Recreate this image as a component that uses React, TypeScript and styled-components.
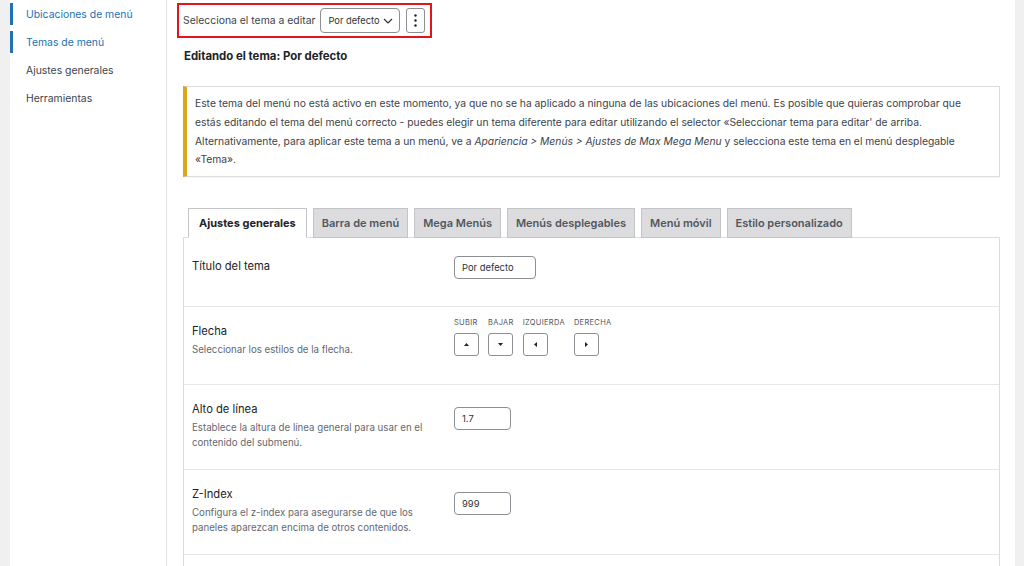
import styled, { createGlobalStyle } from "styled-components";

const GlobalStyle = createGlobalStyle`
  html, body {
    margin: 0;
    padding: 0;
    background: #f0f0f1;
    font-family: Inter, "Noto Sans", "Liberation Sans", sans-serif;
    color: #3c434a;
    overflow: hidden;
  }
  * { box-sizing: border-box; }
`;

const Page = styled.div`
  display: flex;
  min-height: 566px;
  padding-left: 10px;
  padding-right: 9px;
`;

const Sidebar = styled.nav`
  width: 157px;
  flex-shrink: 0;
  background: #fff;
  border-right: 1px solid #e2e4e7;
  padding-top: 3px;
  display: flex;
  flex-direction: column;
  gap: 6px;
`;

const NavItem = styled.a<{ $active?: boolean }>`
  display: flex;
  align-items: center;
  height: 22px;
  padding-left: 13px;
  border-left: 3px solid ${(p) => (p.$active ? "#2271b1" : "transparent")};
  color: ${(p) => (p.$active ? "#2271b1" : "#3c434a")};
  font-size: 10.4px;
  text-decoration: none;
`;

const Main = styled.main`
  flex: 1;
  background: #fff;
  padding: 3px 15px 0 10px;
  display: flex;
  flex-direction: column;
  & > * { flex-shrink: 0; }
`;

const ThemePicker = styled.div`
  align-self: flex-start;
  display: flex;
  align-items: center;
  height: 35px;
  padding: 0 5px 0 4px;
  border: 2px solid #e3141b;
  gap: 4px;
  font-size: 10.4px;
  color: #3c434a;
  white-space: nowrap;
`;

const Select = styled.div`
  display: flex;
  align-items: center;
  justify-content: space-between;
  width: 80px;
  height: 25px;
  padding: 0 6px 0 7px;
  margin-left: 1px;
  border: 1px solid #8c8f94;
  border-radius: 4px;
  font-size: 9.3px;
  color: #2c3338;
`;

const DotsButton = styled.div`
  display: flex;
  align-items: center;
  justify-content: center;
  width: 19px;
  height: 25px;
  margin-left: 2px;
  border: 1px solid #8c8f94;
  border-radius: 3px;
`;

const Heading = styled.h2`
  margin: 11px 0 0 7px;
  font-size: 11.4px;
  font-weight: 700;
  color: #1d2327;
  line-height: 14px;
`;

const Notice = styled.div`
  margin: 23px 0 0 6px;
  border: 1px solid #dcdcde;
  border-left: 4px solid #dba617;
  box-shadow: 0 1px 1px rgba(0, 0, 0, 0.04);
  padding: 7px 12px 7px 8px;
  font-size: 10.3px;
  line-height: 18.8px;
  color: #3c434a;
  p { margin: 0; }
`;

const Tabs = styled.div`
  display: flex;
  gap: 6px;
  margin: 31px 0 0 11px;
  position: relative;
  z-index: 1;
`;

const Tab = styled.div<{ $active?: boolean }>`
  height: 30px;
  padding: 0 ${(p) => (p.$active ? "10px" : "8px")};
  display: flex;
  align-items: center;
  font-size: 11px;
  font-weight: ${(p) => (p.$active ? 650 : 600)};
  background: ${(p) => (p.$active ? "#fff" : "#dcdcde")};
  color: ${(p) => (p.$active ? "#1d2327" : "#50575e")};
  border: 1px solid #c3c4c7;
  border-bottom-color: ${(p) => (p.$active ? "#fff" : "#c3c4c7")};
`;

const Panel = styled.div`
  margin: -1px 0 0 6px;
  border: 1px solid #dcdcde;
  border-bottom: none;
  flex: 1;
`;

const Row = styled.div<{ $height: number; $top?: number }>`
  display: grid;
  grid-template-columns: 262px 1fr;
  align-items: start;
  height: ${(p) => p.$height}px;
  padding: ${(p) => p.$top ?? 16}px 8px 0;
  & + & { border-top: 1px solid #e6e6e8; }
`;

const Label = styled.div`
  display: flex;
  flex-direction: column;
  gap: 4px;
`;

const Title = styled.div<{ $inline?: boolean }>`
  font-size: 11.2px;
  line-height: 16px;
  color: #1d2327;
  margin-top: ${(p) => (p.$inline ? "2px" : "0")};
`;

const Desc = styled.div`
  font-size: 9.7px;
  line-height: 14.5px;
  color: #646970;
  max-width: 240px;
`;

const Input = styled.div<{ $width: number; $flush?: boolean }>`
  width: ${(p) => p.$width}px;
  height: 23px;
  margin-top: ${(p) => (p.$flush ? "0" : "6px")};
  border: 1px solid #8c8f94;
  border-radius: 4px;
  display: flex;
  align-items: center;
  padding: 0 7px;
  font-size: 9.4px;
  color: #2c3338;
`;

const ArrowGroups = styled.div`
  display: flex;
  gap: 9px;
  margin-top: -5px;
`;

const ArrowGroup = styled.div`
  display: flex;
  flex-direction: column;
  gap: 5px;
`;

const ArrowLabel = styled.span`
  font-size: 7.5px;
  line-height: 10px;
  letter-spacing: 0.3px;
  color: #50575e;
`;

const ArrowButton = styled.div`
  width: 25px;
  height: 23px;
  border: 1px solid #8c8f94;
  border-radius: 3px;
  display: flex;
  align-items: center;
  justify-content: center;
`;

const Triangle = ({ dir }: { dir: "up" | "down" | "left" | "right" }) => {
  const pts = {
    up: "0,4 2.5,1 5,4",
    down: "0,1 2.5,4 5,1",
    left: "4,0 1,2.5 4,5",
    right: "1,0 4,2.5 1,5",
  }[dir];
  return (
    <svg width="5" height="5" viewBox="0 0 5 5">
      <polygon points={pts} fill="#1d2327" />
    </svg>
  );
};

const arrows: { label: string; dir: "up" | "down" | "left" | "right" }[] = [
  { label: "SUBIR", dir: "up" },
  { label: "BAJAR", dir: "down" },
  { label: "IZQUIERDA", dir: "left" },
  { label: "DERECHA", dir: "right" },
];

const tabs = [
  "Ajustes generales",
  "Barra de menú",
  "Mega Menús",
  "Menús desplegables",
  "Menú móvil",
  "Estilo personalizado",
];

export default function App() {
  return (
    <>
      <GlobalStyle />
      <Page>
        <Sidebar>
          <NavItem $active>Ubicaciones de menú</NavItem>
          <NavItem $active>Temas de menú</NavItem>
          <NavItem>Ajustes generales</NavItem>
          <NavItem>Herramientas</NavItem>
        </Sidebar>
        <Main>
          <ThemePicker>
            <span>Selecciona el tema a editar</span>
            <Select>
              <span>Por defecto</span>
              <svg width="10" height="6" viewBox="0 0 10 6">
                <path d="M1 1l4 4 4-4" fill="none" stroke="#2c3338" strokeWidth="1.2" />
              </svg>
            </Select>
            <DotsButton>
              <svg width="3" height="13" viewBox="0 0 3 13">
                <circle cx="1.5" cy="1.5" r="1.2" fill="#1d2327" />
                <circle cx="1.5" cy="6.5" r="1.2" fill="#1d2327" />
                <circle cx="1.5" cy="11.5" r="1.2" fill="#1d2327" />
              </svg>
            </DotsButton>
          </ThemePicker>
          <Heading>Editando el tema: Por defecto</Heading>
          <Notice>
            <p>
              Este tema del menú no está activo en este momento, ya que no se ha aplicado a
              ninguna de las ubicaciones del menú. Es posible que quieras comprobar que estás
              editando el tema del menú correcto - puedes elegir un tema diferente para editar
              utilizando el selector «Seleccionar tema para editar' de arriba.
              Alternativamente, para aplicar este tema a un menú, ve a{" "}
              <em>Apariencia &gt; Menús &gt; Ajustes de Max Mega Menu</em> y selecciona este
              tema en el menú desplegable «Tema».
            </p>
          </Notice>
          <Tabs>
            {tabs.map((t, i) => (
              <Tab key={t} $active={i === 0}>
                {t}
              </Tab>
            ))}
          </Tabs>
          <Panel>
            <Row $height={68} $top={18}>
              <Title $inline>Título del tema</Title>
              <Input $width={82} $flush>Por defecto</Input>
            </Row>
            <Row $height={78}>
              <Label>
                <Title>Flecha</Title>
                <Desc>Seleccionar los estilos de la flecha.</Desc>
              </Label>
              <ArrowGroups>
                {arrows.map((a) => (
                  <ArrowGroup key={a.label}>
                    <ArrowLabel>{a.label}</ArrowLabel>
                    <ArrowButton>
                      <Triangle dir={a.dir} />
                    </ArrowButton>
                  </ArrowGroup>
                ))}
              </ArrowGroups>
            </Row>
            <Row $height={85}>
              <Label>
                <Title>Alto de línea</Title>
                <Desc>Establece la altura de línea general para usar en el contenido del submenú.</Desc>
              </Label>
              <Input $width={57}>1.7</Input>
            </Row>
            <Row $height={85}>
              <Label>
                <Title>Z-Index</Title>
                <Desc>Configura el z-index para asegurarse de que los paneles aparezcan encima de otros contenidos.</Desc>
              </Label>
              <Input $width={57}>999</Input>
            </Row>
            <Row $height={85} />
          </Panel>
        </Main>
      </Page>
    </>
  );
}
